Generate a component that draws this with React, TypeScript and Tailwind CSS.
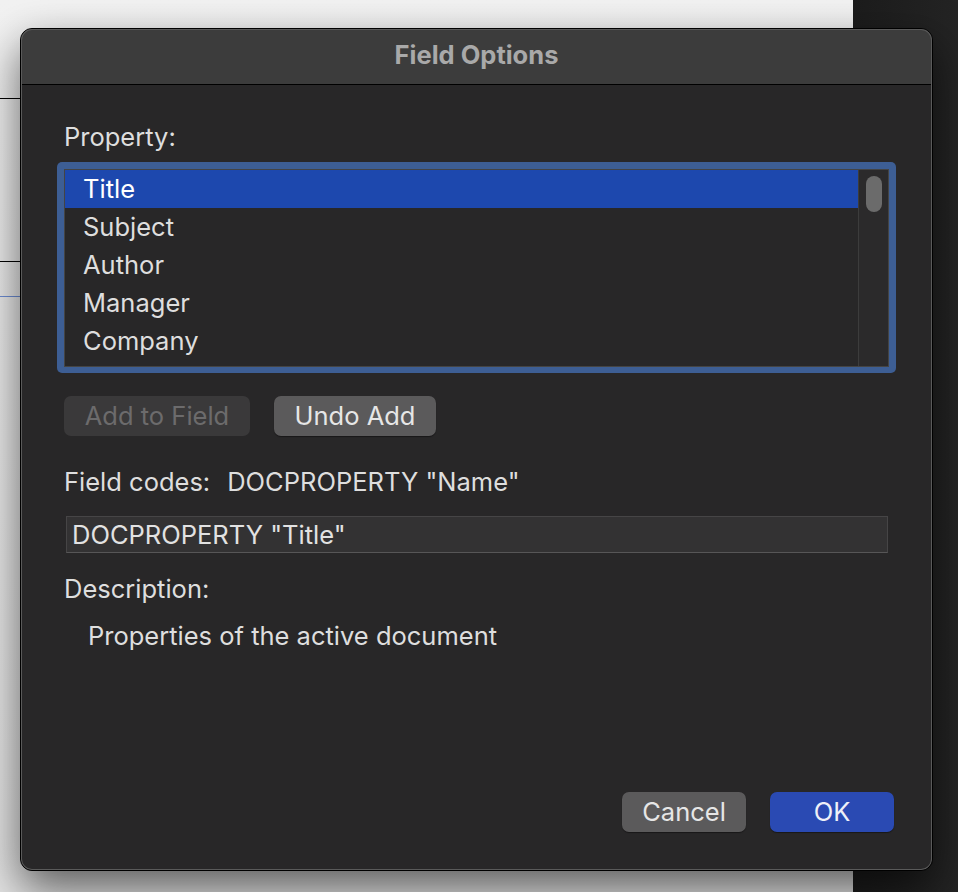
import React from "react";

const font = { fontFamily: "Inter, 'Noto Sans', sans-serif" } as React.CSSProperties;

const items = ["Title", "Subject", "Author", "Manager", "Company"];

export default function App() {
  return (
    <div
      className="relative w-[958px] h-[892px] overflow-hidden flex bg-[#1f1f1f]"
      style={font}
    >
      {/* background document */}
      <div className="w-[853px] h-full bg-gradient-to-b from-[#f2f2f2] to-[#e4e4e4] flex flex-col">
        <div className="h-[98px]" />
        <div className="w-[20px] h-px bg-black" />
        <div className="h-[162px]" />
        <div className="w-[20px] h-px bg-black" />
        <div className="h-[34px]" />
        <div className="w-[20px] h-px bg-[#6f8fd6]" />
      </div>
      <div className="flex-1 h-full bg-gradient-to-r from-[#1c1c1c] to-[#242424]" />

      {/* dialog */}
      <div className="absolute left-[20px] top-[28px] w-[913px] h-[843px] rounded-[12px] border border-black bg-[#282728] shadow-[0_18px_45px_rgba(0,0,0,0.6)] flex flex-col overflow-hidden">
        <div className="absolute inset-0 rounded-[11px] shadow-[inset_0_0_0_1px_#5a5a5a] pointer-events-none z-10" />
        {/* title bar */}
        <div className="h-[56px] shrink-0 bg-[#3c3c3c] border-b border-black flex items-center justify-center pb-[3px]">
          <span className="text-[25.5px] leading-[30px] font-bold text-[#a9a9a9]">Field Options</span>
        </div>

        {/* body */}
        <div className="flex-1 flex flex-col px-[36px] text-[25.5px] leading-[30px]">
          <div className="mt-[37px] ml-[7px] text-[#dedede]">Property:</div>

          {/* list box */}
          <div className="mt-[10px] h-[211px] rounded-[5px] bg-[#3d5e94] p-[7px] pb-[6px]">
            <div className="h-full border border-[#444444] bg-[#282728] flex">
              <div className="flex-1 flex flex-col">
                {items.map((it, i) => (
                  <div
                    key={it}
                    className={
                      i === 0
                        ? "h-[38px] shrink-0 flex items-center pl-[18px] text-white bg-[#1d48ae]"
                        : "h-[38px] shrink-0 flex items-center pl-[18px] text-[#dedede]"
                    }
                  >
                    {it}
                  </div>
                ))}
              </div>
              <div className="w-[30px] border-l border-[#3c3c3c] bg-[#2b2a2b] flex justify-center pt-[6px]">
                <div className="w-[16px] h-[36px] rounded-full bg-[#6b6b6b]" />
              </div>
            </div>
          </div>

          {/* buttons */}
          <div className="mt-[23px] ml-[7px] flex gap-[24px]">
            <div className="w-[186px] h-[40px] rounded-[7px] bg-[#3a393a] flex items-center justify-center text-[#6c6b6c]">
              Add to Field
            </div>
            <div className="w-[162px] h-[40px] rounded-[7px] bg-[#5b5a5b] flex items-center justify-center text-[#e6e6e6] shadow-[0_1px_1px_rgba(0,0,0,0.4)]">
              Undo Add
            </div>
          </div>

          <div className="mt-[31px] ml-[7px] flex text-[#dedede]">
            <span>Field codes:</span>
            <span className="ml-[17px]">DOCPROPERTY "Name"</span>
          </div>

          <div className="mt-[19px] ml-[9px] w-[822px] h-[37px] bg-[#333233] border border-[#464546] border-b-[#575657] flex items-center pl-[5px] text-[#e2e2e2]">
            DOCPROPERTY "Title"
          </div>

          <div className="mt-[21px] ml-[7px] text-[#dedede]">Description:</div>
          <div className="mt-[17px] ml-[31px] text-[#dedede]">
            Properties of the active document
          </div>

          <div className="mt-auto mb-[38px] flex justify-end gap-[24px] pr-[2px]">
            <div className="w-[124px] h-[40px] rounded-[7px] bg-[#5b5a5b] flex items-center justify-center text-[#e6e6e6] shadow-[0_1px_1px_rgba(0,0,0,0.4)]">
              Cancel
            </div>
            <div className="w-[124px] h-[40px] rounded-[7px] bg-[#2a4ab3] flex items-center justify-center text-[#eef0f8] shadow-[0_1px_1px_rgba(0,0,0,0.4)]">
              OK
            </div>
          </div>
        </div>
      </div>
    </div>
  );
}
